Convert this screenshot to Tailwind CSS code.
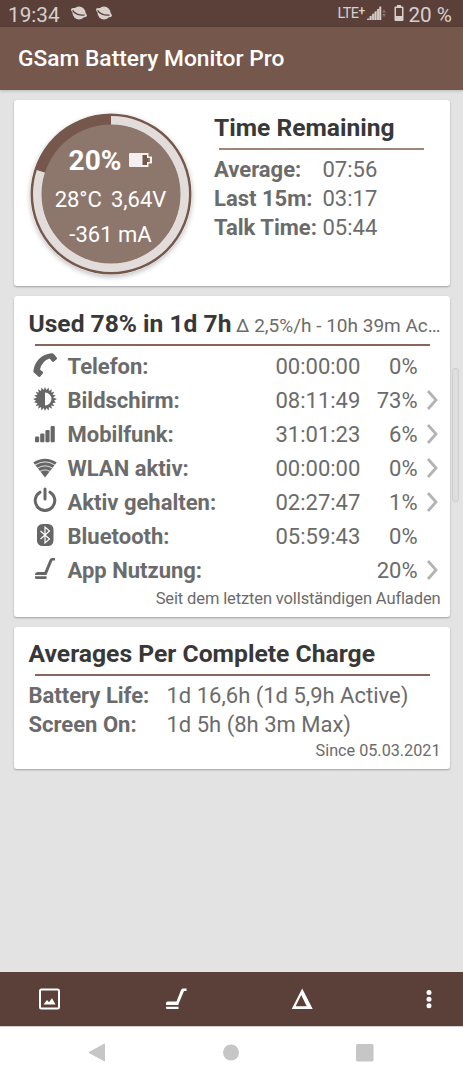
<!DOCTYPE html>
<html lang="de">
<head>
  <meta charset="UTF-8">
  <meta name="viewport" content="width=device-width, initial-scale=1.0">
  <title>GSam Battery Monitor Pro</title>
  <script src="https://cdn.jsdelivr.net/npm/@tailwindcss/browser@4"></script>
</head>
<body class="w-[463px] h-[1080px] overflow-hidden flex flex-col bg-[#e3e3e3] font-['Roboto',sans-serif] text-[22px] text-[#6b6b6b] whitespace-nowrap">
  <!-- Status bar -->
  <div class="h-[27px] shrink-0 bg-[#5a4038] text-[#d8d0cd] flex items-center pl-[8px] pr-[11px]">
    <span class="text-[20.7px] leading-[27px] pt-[3px] w-[62px]">19:34</span>
    <svg class="w-[18px] h-[16px] mr-[7px] -mt-[2px]" viewBox="0 0 18 16" fill="currentColor">
      <circle cx="9" cy="8" r="6.5"/>
      <ellipse cx="9" cy="7.6" rx="8.6" ry="3.4" transform="rotate(24 9 7.6)"/>
      <path d="M2.6 5.3C3.6 8.2 9.5 11 14.6 10" fill="none" stroke="#5a4038" stroke-width="1.2"/>
    </svg>
    <svg class="w-[18px] h-[16px] -mt-[2px]" viewBox="0 0 18 16" fill="currentColor">
      <circle cx="9" cy="8" r="6.5"/>
      <ellipse cx="9" cy="7.6" rx="8.6" ry="3.4" transform="rotate(24 9 7.6)"/>
      <path d="M2.6 5.3C3.6 8.2 9.5 11 14.6 10" fill="none" stroke="#5a4038" stroke-width="1.2"/>
    </svg>
    <span class="ml-auto text-[14.5px] tracking-[-0.6px] flex items-center">LTE<span class="text-[12px] font-medium -mt-[5px]">+</span></span>
    <svg class="w-[19px] h-[15px] ml-[3px] mr-[8px]" viewBox="0 0 19 15">
      <path d="M0 14L13.500 1v13z" fill="#d8d0cd" opacity="0.45"/>
      <path d="M1 14v-1.500M3.500 14v-4M6 14V7.800M8.500 14V5.500M11 14V3" stroke="#d8d0cd" stroke-width="1.700"/>
      <path d="M13.300 14V0.500" stroke="#d8d0cd" stroke-width="1.900"/>
      <path d="M15.300 6.500L17 3.200l1.700 3.300zM15.300 8l1.700 3.300L18.700 8z" fill="#8b7670"/>
    </svg>
    <svg class="w-[10px] h-[16px] mr-[4px] -mt-[2px]" viewBox="0 0 10 16" fill="currentColor">
      <path fill-rule="evenodd" d="M3 0h4v1.500h1.500q1 0 1 1V15q0 1-1 1h-7q-1 0-1-1V2.500q0-1 1-1H3zM2 3v8h6V3z"/>
    </svg>
    <span class="text-[20.7px] leading-[27px] pt-[3px]">20 %</span>
  </div>

  <!-- App bar -->
  <header class="h-[63px] shrink-0 bg-[#75574b] text-white flex items-center pl-[18px] shadow-[0_1px_3px_rgba(0,0,0,0.2)]">
    <h1 class="text-[22.750px] font-medium pt-[2px]">GSam Battery Monitor Pro</h1>
  </header>

  <main class="flex-1 relative flex flex-col gap-[10px] pt-[10px] pl-[13.500px] pr-[13.500px]">
    <!-- Time remaining -->
    <section class="h-[186px] shrink-0 flex bg-white rounded-[3px] shadow-[0_1px_2px_rgba(0,0,0,0.3)]">
      <div class="relative w-[162px] h-[162px] mt-[12.500px] ml-[16px] rounded-full shadow-[0_2px_5px_rgba(0,0,0,0.25)]">
        <svg class="w-[162px] h-[162px]" viewBox="0 0 162 162">
          <circle cx="81" cy="81" r="80.500" fill="#75574b"/>
          <circle cx="81" cy="81" r="73.500" fill="none" stroke="#e2dddb" stroke-width="9" pathLength="100" stroke-dasharray="80 20" transform="rotate(-90 81 81)"/>
          <circle cx="81" cy="81" r="69.500" fill="#8d776d"/>
        </svg>
        <div class="absolute inset-0 text-white flex flex-col items-center pt-[30px]">
          <div class="h-[36px] flex items-center gap-[8px]">
            <span class="text-[28px] font-bold">20%</span>
            <svg class="w-[23px] h-[14px] -mt-[2px]" viewBox="0 0 23 14">
              <rect x="13" y="1" width="6" height="12" fill="#75574b"/>
              <path fill-rule="evenodd" fill="#f3f0ef" d="M1 0h18.500v3.500H23v7h-3.500V14H1q-1 0-1-1V1q0-1 1-1zM13.500 2v10H18V9h3V5h-3V2z"/>
            </svg>
          </div>
          <div class="h-[41px] flex items-center gap-[9px]"><span>28°C</span><span>3,64V</span></div>
          <div class="h-[30px] flex items-center">-361 mA</div>
        </div>
      </div>
      <div class="ml-[22.500px] pt-[13px]">
        <h2 class="h-[30px] leading-[30px] text-[24.600px] font-bold text-[#383838]">Time Remaining</h2>
        <div class="w-[205px] h-[1.500px] ml-[5px] mt-[5px] mb-[5px] bg-[#a08478]"></div>
        <div class="grid grid-cols-[108.500px_auto] auto-rows-[29px] items-center">
          <b>Average:</b><span>07:56</span>
          <b>Last 15m:</b><span>03:17</span>
          <b>Talk Time:</b><span>05:44</span>
        </div>
      </div>
    </section>

    <!-- Usage since last charge -->
    <section class="h-[321px] shrink-0 bg-white rounded-[3px] pl-[15px] pr-[9px] pt-[10.500px] shadow-[0_1px_2px_rgba(0,0,0,0.3)]">
      <div class="h-[34px] flex items-baseline leading-[34px]">
        <h2 class="text-[24.600px] font-bold text-[#383838] w-[208.500px]">Used 78% in 1d 7h</h2>
        <span class="text-[19px]">Δ 2,5%/h - 10h 39m Ac…</span>
      </div>
      <div class="h-[1.500px] ml-[6px] mr-[11px] mt-[3.500px] mb-[3.500px] bg-[#87675b]"></div>
      <div class="grid grid-cols-[34.500px_1fr_84px_58px_23px] auto-rows-[34px] items-center pl-[4.500px]">
        <svg class="w-6 h-6 -mt-[3px]" viewBox="0 0 24 24" fill="#666"><path d="M.3 19C1 9 8 1.300 18.300.2Q20 0 21 1.300l2.700 3.300q.7.900-.1 1.600l-2.900 2.500q-.9.700-1.600-.1l-2.500-3Q9 8 7 16.500l2.700 2.200q.8.700.2 1.600l-2.600 3.200q-.8.900-1.700.2z"/></svg>
        <b>Telefon:</b><span>00:00:00</span><span class="text-right">0%</span><i></i>

        <svg class="w-6 h-6 -mt-[2px]" viewBox="0 0 24 24" fill="#666">
          <path fill-rule="evenodd" d="M12 0l1.300 3.100L15.700.6l.2 3.300L19 2.300l-.9 3.200 3.300-.5-1.900 2.700 3.300.7-2.700 2L24 12l-2.900 1.600 1.700 2-3.300.7 1.900 2.700-3.300-.5.9 3.200-3.100-1.600-.2 3.300-2.400-2.500L12 24l-1.300-3.100-2.400 2.500-.2-3.300L5 21.700l.9-3.200-3.300.5 1.900-2.700-3.300-.7 1.700-2L0 12l3.900-1.600-2.700-2 3.300-.7L2.600 5l3.300.5L5 2.300l3.100 1.600.2-3.300 2.400 2.500zM12 5.500v13a6.500 6.500 0 0 0 0-13z"/>
        </svg>
        <b>Bildschirm:</b><span>08:11:49</span><span class="text-right">73%</span>
        <svg class="w-3 h-5 ml-[8px] -mt-[1px]" viewBox="0 0 12 20" fill="none" stroke="#b3b3b3" stroke-width="2.800"><path d="M2 1l8 9-8 9"/></svg>

        <svg class="w-6 h-6" viewBox="0 0 24 24" fill="#666"><rect x="2" y="14.500" width="4.200" height="5.800" rx="1"/><rect x="7.200" y="11.500" width="4.200" height="8.800" rx="1"/><rect x="12.400" y="8" width="4.200" height="12.300" rx="1"/><rect x="17.600" y="4" width="4.200" height="16.300" rx="1"/></svg>
        <b>Mobilfunk:</b><span>31:01:23</span><span class="text-right">6%</span>
        <svg class="w-3 h-5 ml-[8px] -mt-[1px]" viewBox="0 0 12 20" fill="none" stroke="#b3b3b3" stroke-width="2.800"><path d="M2 1l8 9-8 9"/></svg>

        <svg class="w-6 h-6 -mt-[1px]" viewBox="0 0 24 24">
          <path d="M12 21.500L.3 6.500Q12-1 23.700 6.500z" fill="#666"/>
          <path d="M2 9Q12 2.800 22 9M4.300 12.300Q12 7.400 19.700 12.300M6.800 15.500Q12 12.400 17.200 15.500" fill="none" stroke="#fff" stroke-width="0.800"/>
        </svg>
        <b>WLAN aktiv:</b><span>00:00:00</span><span class="text-right">0%</span>
        <svg class="w-3 h-5 ml-[8px] -mt-[1px]" viewBox="0 0 12 20" fill="none" stroke="#b3b3b3" stroke-width="2.800"><path d="M2 1l8 9-8 9"/></svg>

        <svg class="w-6 h-[26px] -mt-[5px]" viewBox="0 0 24 26" fill="none" stroke="#666" stroke-width="3" stroke-linecap="round"><path d="M12 2v10M7 5.200a9.800 9.800 0 1 0 10 0"/></svg>
        <b>Aktiv gehalten:</b><span>02:27:47</span><span class="text-right">1%</span>
        <svg class="w-3 h-5 ml-[8px] -mt-[1px]" viewBox="0 0 12 20" fill="none" stroke="#b3b3b3" stroke-width="2.800"><path d="M2 1l8 9-8 9"/></svg>

        <svg class="w-6 h-6 -mt-[2px]" viewBox="0 0 24 24"><rect x="4" y="1" width="16.500" height="22" rx="5.500" fill="#666"/><path d="M7.500 8l9 8-4.500 4V4l4.500 4-9 8" fill="none" stroke="#fff" stroke-width="1.200"/></svg>
        <b>Bluetooth:</b><span>05:59:43</span><span class="text-right">0%</span><i></i>

        <svg class="w-6 h-6 -mt-[4px]" viewBox="0 0 24 24" fill="#666"><path d="M2 19q0-3 3-3h6.500L16.500 4q.8-2 2.500-2h3v2.500h-2.500L13.500 19zM2 20.200h11.500V23H3.500Q2 23 2 21.500z"/></svg>
        <b>App Nutzung:</b><span></span><span class="text-right">20%</span>
        <svg class="w-3 h-5 ml-[8px] -mt-[1px]" viewBox="0 0 12 20" fill="none" stroke="#b3b3b3" stroke-width="2.800"><path d="M2 1l8 9-8 9"/></svg>
      </div>
      <p class="text-right text-[16.500px] tracking-[-0.130px] leading-[23px]">Seit dem letzten vollständigen Aufladen</p>
    </section>

    <!-- Averages -->
    <section class="h-[142px] shrink-0 bg-white rounded-[3px] pl-[15px] pr-[9px] pt-[11px] shadow-[0_1px_2px_rgba(0,0,0,0.3)]">
      <h2 class="h-[32px] leading-[32px] text-[24.700px] font-bold text-[#383838]">Averages Per Complete Charge</h2>
      <div class="h-[1.500px] ml-[6px] mr-[11px] mt-[4px] mb-[5px] bg-[#87675b]"></div>
      <div class="grid grid-cols-[138px_auto] auto-rows-[29px] items-center">
        <b>Battery Life:</b><span>1d 16,6h (1d 5,9h Active)</span>
        <b>Screen On:</b><span>1d 5h (8h 3m Max)</span>
      </div>
      <p class="text-right text-[16.200px] leading-[23px]">Since 05.03.2021</p>
    </section>

    <!-- Scroll thumb -->
    <div class="absolute right-[4px] top-[278px] w-[7px] h-[134px] rounded-[3px] bg-[#dedede] border border-[#cfcfcf]"></div>
  </main>

  <!-- Toolbar -->
  <footer class="h-[54px] shrink-0 bg-[#5a4038] flex items-center justify-between pl-[38px] pr-[23px]">
    <svg class="w-[22px] h-[22px]" viewBox="0 0 22 22" fill="none" stroke="#fff" stroke-width="2"><rect x="2" y="1.500" width="19" height="19" rx="1.500"/><path d="M5.500 16.500L9 12l2 2.200 3-4 3.500 6.300z" fill="#fff" stroke="none"/></svg>
    <svg class="w-[22px] h-[22px]" viewBox="0 0 22 22" fill="#fff"><path d="M1 17v-2q0-1.500 1.500-1.500h9L16 2q.6-1.500 2-1.500h3.500v2.500H19L13.500 16v1zM1 18.800h12.500V21H2Q1 21 1 20z"/></svg>
    <svg class="w-[22px] h-[22px]" viewBox="0 0 22 22" fill="#fff"><path fill-rule="evenodd" d="M11.200.5L21.700 21H.7zM10.200 7L4.700 18.300h11z"/></svg>
    <svg class="w-[22px] h-[22px]" viewBox="0 0 22 22" fill="#fff"><circle cx="11" cy="4.500" r="2.500"/><circle cx="11" cy="11.200" r="2.500"/><circle cx="11" cy="17.800" r="2.500"/></svg>
  </footer>

  <!-- Android navigation -->
  <nav class="h-[54px] shrink-0 bg-white border-t border-[#d5d0ce] flex items-center justify-between pb-[2px] pl-[88px] pr-[89px] text-[#c6c6c6]">
    <svg class="w-[17px] h-[19px]" viewBox="0 0 17 19" fill="currentColor" stroke="currentColor" stroke-linejoin="round"><path d="M1 9.500L16.500 1v17z"/></svg>
    <svg class="w-[17px] h-[17px]" viewBox="0 0 17 17" fill="currentColor"><circle cx="9" cy="8.500" r="8"/></svg>
    <svg class="w-[18px] h-[18px]" viewBox="0 0 18 18" fill="currentColor"><rect width="17.500" height="17.500" rx="1.500"/></svg>
  </nav>
</body>
</html>
